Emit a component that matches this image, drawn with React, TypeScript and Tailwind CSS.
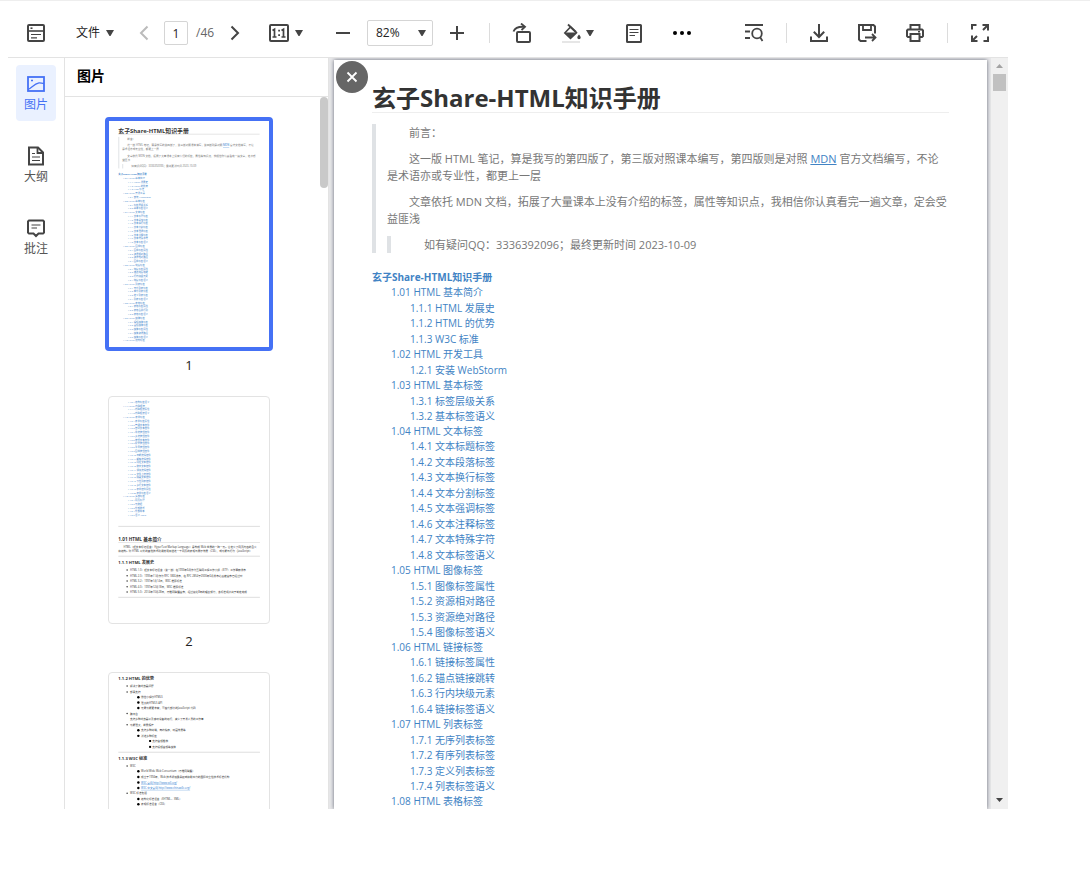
import { ReactNode, useState } from 'react';

type TocEntry = { level: number; text: string };

const TOC: TocEntry[] = [
  { level: 0, text: '玄子Share-HTML知识手册' },
  { level: 1, text: '1.01 HTML 基本简介' },
  { level: 2, text: '1.1.1 HTML 发展史' },
  { level: 2, text: '1.1.2 HTML 的优势' },
  { level: 2, text: '1.1.3 W3C 标准' },
  { level: 1, text: '1.02 HTML 开发工具' },
  { level: 2, text: '1.2.1 安装 WebStorm' },
  { level: 1, text: '1.03 HTML 基本标签' },
  { level: 2, text: '1.3.1 标签层级关系' },
  { level: 2, text: '1.3.2 基本标签语义' },
  { level: 1, text: '1.04 HTML 文本标签' },
  { level: 2, text: '1.4.1 文本标题标签' },
  { level: 2, text: '1.4.2 文本段落标签' },
  { level: 2, text: '1.4.3 文本换行标签' },
  { level: 2, text: '1.4.4 文本分割标签' },
  { level: 2, text: '1.4.5 文本强调标签' },
  { level: 2, text: '1.4.6 文本注释标签' },
  { level: 2, text: '1.4.7 文本特殊字符' },
  { level: 2, text: '1.4.8 文本标签语义' },
  { level: 1, text: '1.05 HTML 图像标签' },
  { level: 2, text: '1.5.1 图像标签属性' },
  { level: 2, text: '1.5.2 资源相对路径' },
  { level: 2, text: '1.5.3 资源绝对路径' },
  { level: 2, text: '1.5.4 图像标签语义' },
  { level: 1, text: '1.06 HTML 链接标签' },
  { level: 2, text: '1.6.1 链接标签属性' },
  { level: 2, text: '1.6.2 锚点链接跳转' },
  { level: 2, text: '1.6.3 行内块级元素' },
  { level: 2, text: '1.6.4 链接标签语义' },
  { level: 1, text: '1.07 HTML 列表标签' },
  { level: 2, text: '1.7.1 无序列表标签' },
  { level: 2, text: '1.7.2 有序列表标签' },
  { level: 2, text: '1.7.3 定义列表标签' },
  { level: 2, text: '1.7.4 列表标签语义' },
  { level: 1, text: '1.08 HTML 表格标签' },
];

// rest of the first page, only visible in its thumbnail
const TOC_PAGE_1_REST: TocEntry[] = [
  { level: 2, text: '1.8.1 表格标签属性' },
  { level: 2, text: '1.8.2 表格合并行列' },
  { level: 2, text: '1.8.3 表格标签语义' },
  { level: 1, text: '1.09 HTML 媒体标签' },
  { level: 2, text: '1.9.1 视频媒体标签' },
  { level: 2, text: '1.9.2 音频媒体标签' },
  { level: 2, text: '1.9.3 媒体标签属性' },
  { level: 2, text: '1.9.4 媒体资源路径' },
  { level: 2, text: '1.9.5 媒体标签语义' },
  { level: 1, text: '1.10 HTML 结构标签' },
];

const TOC_PAGE_2: TocEntry[] = [
  { level: 2, text: '1.10.1 结构标签语义' },
  { level: 1, text: '1.11 HTML 内联框架' },
  { level: 2, text: '1.11.1 内联框架属性' },
  { level: 2, text: '1.11.2 内联框架语义' },
  { level: 1, text: '1.12 HTML 表单标签' },
  { level: 2, text: '1.12.1 表单标签属性' },
  { level: 2, text: '1.12.2 普通文本控件' },
  { level: 2, text: '1.12.3 密码文本控件' },
  { level: 2, text: '1.12.4 单选按钮控件' },
  { level: 2, text: '1.12.5 多选按钮控件' },
  { level: 2, text: '1.12.6 按钮文本控件' },
  { level: 2, text: '1.12.7 提交按钮控件' },
  { level: 2, text: '1.12.8 重置按钮控件' },
  { level: 2, text: '1.12.9 图像按钮控件' },
  { level: 2, text: '1.12.10 日期选择控件' },
  { level: 2, text: '1.12.11 邮箱选择控件' },
  { level: 2, text: '1.12.12 网址文本控件' },
  { level: 2, text: '1.12.13 数字文本控件' },
  { level: 2, text: '1.12.14 滑块选择控件' },
  { level: 2, text: '1.12.15 文件上传控件' },
  { level: 2, text: '1.12.16 隐藏文本控件' },
  { level: 2, text: '1.12.17 下拉列表控件' },
  { level: 2, text: '1.12.18 多行文本控件' },
  { level: 2, text: '1.12.19 表单控件属性' },
  { level: 2, text: '1.12.20 表单标签语义' },
  { level: 1, text: '1.13 HTML 头部标签' },
  { level: 2, text: '1.13.1 网页标题' },
  { level: 2, text: '1.13.2 元数据' },
  { level: 2, text: '1.13.3 外部样式' },
  { level: 2, text: '1.13.4 外部脚本' },
  { level: 2, text: '1.13.5 语义 Meta' },
];

const HISTORY = [
  { y: 711, text: 'HTML 1.0：超文本标记语言（第一版）在1993年6月作为互联网工程工作小组（IETF）工作草案发布' },
  { y: 735, text: 'HTML 2.0：1995年11月作为 RFC 1866发布，在 RFC 2854于2000年6月发布之后被宣布已经过时' },
  { y: 756, text: 'HTML 3.2：1997年1月14日，W3C 推荐标准' },
  { y: 780, text: 'HTML 4.0：1997年12月18日，W3C 推荐标准' },
  { y: 801, text: 'HTML 5.0：2014年10月28日，万维网联盟宣布，经过接近8年的艰苦努力，该标准规范终于制定完成' },
];

const PAGE_3_ITEMS = [
  { level: 1, y: 57, text: '解决了跨浏览器问题' },
  { level: 1, y: 82, text: '部署支持' },
  { level: 2, y: 103, text: '微信小程序HTML5' },
  { level: 2, y: 125, text: '强大的HTML5 API' },
  { level: 2, y: 147, text: '元素功能更丰富，可替代部分的JavaScript 代码' },
  { level: 1, y: 170, text: '跨平台' },
  { level: 1, y: 192, text: '支持多种浏览器以及移动设备的运行，减少了开发人员的工作量', plain: true },
  { level: 1, y: 216, text: '功能强大，前景辉煌' },
  { level: 2, y: 238, text: '支持多种终端，离线缓存，动画效果等' },
  { level: 2, y: 261, text: '新增多种标签' },
  { level: 3, y: 282, text: '支持音频播放' },
  { level: 3, y: 306, text: '支持视频音频等媒体' },
  { level: 1, y: 384, text: 'W3C' },
  { level: 2, y: 406, text: 'World Wide Web Consortium（万维网联盟）' },
  { level: 2, y: 429, text: '成立于1994年，Web 技术领域最具权威和影响力的国际中立性技术标准机构' },
  { level: 2, y: 452, text: 'W3C 官网 http://www.w3.org/', link: true },
  { level: 2, y: 474, text: 'W3C 中文官网 http://www.chinaw3c.org/', link: true },
  { level: 1, y: 496, text: 'W3C 标准包括' },
  { level: 2, y: 519, text: '结构化标准语言（XHTML 、XML）' },
  { level: 2, y: 541, text: '表现标准语言（CSS）' },
];

function PageImage({ children }: { children: ReactNode }) {
  return (
    <svg
      viewBox="0 0 654 924"
      className="block h-[226px] w-[160px]"
      fontFamily="'Open Sans', 'Noto Sans CJK SC', sans-serif"
      fontSize="10.8"
      fill="#333"
      aria-hidden="true"
    >
      {children}
    </svg>
  );
}

function TocImage({ entries, top }: { entries: TocEntry[]; top: number }) {
  return (
    <g fill="#3f85cb" fontSize="9.7">
      {entries.map((entry, i) => (
        <text
          key={entry.text}
          x={38 + entry.level * 19.5}
          y={top + i * 15.44}
          fontWeight={entry.level === 0 ? 700 : 400}
        >
          {entry.text}
        </text>
      ))}
    </g>
  );
}

function PageOneImage() {
  return (
    <PageImage>
      <text x="38" y="48" fontSize="24" fontWeight="700">玄子Share-HTML知识手册</text>
      <path d="M38 54h578" stroke="#ddd" strokeWidth="3" />
      <path d="M40 65v129M56 176v18" stroke="#dfe2e5" strokeWidth="4" />
      <g fill="#777">
        <text x="75" y="77">前言：</text>
        <text x="75" y="103">这一版 HTML 笔记，算是我写的第四版了，第三版对照课本编写，第四版则是对照</text>
        <text x="466" y="103" fill="#2a7ad0" textDecoration="underline">MDN</text>
        <text x="495" y="103">官方文档编写，不论</text>
        <text x="54" y="120">是术语亦或专业性，都更上一层</text>
        <text x="75" y="146">文章依托 MDN 文档，拓展了大量课本上没有介绍的标签，属性等知识点，我相信你认真看完一遍文章，定会受</text>
        <text x="54" y="163">益匪浅</text>
        <text x="91" y="189">如有疑问QQ：3336392096；最终更新时间 2023-10-09</text>
      </g>
      <TocImage entries={[...TOC, ...TOC_PAGE_1_REST]} top={222} />
    </PageImage>
  );
}

function PageTwoImage() {
  return (
    <PageImage>
      <TocImage entries={TOC_PAGE_2} top={24} />
      <path d="M38 529h579M38 651h579M38 819h579" stroke="#ddd" strokeWidth="4" />
      <text x="38" y="589" fontSize="19" fontWeight="700">1.01 HTML 基本简介</text>
      <path d="M38 595h579" stroke="#ddd" strokeWidth="3" />
      <text x="59" y="617">HTML（超文本标记语言：HyperText Markup Language）是构成 Web 世界的一砖一瓦。它定义了网页内容的含义</text>
      <text x="38" y="633">和结构。除 HTML 以外的其他技术则通常用来描述一个网页的表现与展示效果（CSS），或功能与行为（JavaScript）</text>
      <text x="38" y="683" fontSize="17" fontWeight="700">1.1.1 HTML 发展史</text>
      {HISTORY.map((item) => (
        <g key={item.y}>
          <circle cx="74" cy={item.y - 4} r="3" />
          <text x="86" y={item.y}>{item.text}</text>
        </g>
      ))}
    </PageImage>
  );
}

function PageThreeImage() {
  const textX = [0, 86, 131, 177];
  return (
    <PageImage>
      <text x="38" y="29" fontSize="17" fontWeight="700">1.1.2 HTML 的优势</text>
      <path d="M38 324h579" stroke="#ddd" strokeWidth="4" />
      <text x="38" y="355" fontSize="17" fontWeight="700">1.1.3 W3C 标准</text>
      {PAGE_3_ITEMS.map((item) => (
        <g key={item.y}>
          {item.level === 1 && !item.plain && <circle cx="74" cy={item.y - 4} r="3" />}
          {item.level === 2 && <circle cx="120" cy={item.y - 4} r="5" fill="#000" />}
          {item.level === 3 && <rect x="164" y={item.y - 8} width="8" height="8" fill="#000" />}
          <text
            x={textX[item.level]}
            y={item.y}
            fill={item.link ? '#2a7ad0' : undefined}
            textDecoration={item.link ? 'underline' : undefined}
          >
            {item.text}
          </text>
        </g>
      ))}
    </PageImage>
  );
}

const THUMBNAILS = [
  { page: 1, image: <PageOneImage /> },
  { page: 2, image: <PageTwoImage /> },
  { page: 3, image: <PageThreeImage /> },
];

function Icon({ children }: { children: ReactNode }) {
  return (
    <svg
      viewBox="0 0 20 20"
      className="block h-5 w-5 shrink-0"
      fill="none"
      stroke="currentColor"
      strokeWidth="2"
      aria-hidden="true"
    >
      {children}
    </svg>
  );
}

function Caret() {
  return (
    <svg viewBox="0 0 8 6" className="block h-1.5 w-2 shrink-0 text-[#444]" fill="currentColor" aria-hidden="true">
      <path d="M0 0h8L4.5 6h-1z" />
    </svg>
  );
}

function ToolButton({ label, className, children }: { label: string; className: string; children: ReactNode }) {
  return (
    <button
      type="button"
      aria-label={label}
      title={label}
      className={`flex h-10 shrink-0 items-center justify-center rounded hover:bg-gray-100 ${className}`}
    >
      {children}
    </button>
  );
}

function Divider() {
  return <div className="ml-3 h-5 w-px shrink-0 bg-[#dcdcdc]" />;
}

function Toolbar() {
  const [zoom, setZoom] = useState('82%');
  const [page, setPage] = useState('1');

  return (
    <header className="flex h-[57px] shrink-0 items-center border-b border-[#e3e3e3] px-2 pt-2 text-xs text-[#444]">
      <ToolButton label="侧边栏" className="w-10">
        <Icon>
          <rect x="2" y="2" width="16" height="16" rx="1" />
          <path d="M2 8h16" strokeWidth="1.6" />
          <path d="M4.5 5.2h2" strokeWidth="1.6" />
          <path d="M5 11.5h10M5 14.8h6" strokeWidth="1.2" />
        </Icon>
      </ToolButton>
      <button type="button" className="ml-5 flex h-10 w-[38px] shrink-0 items-center justify-between text-[#222]">
        文件
        <Caret />
      </button>

      <ToolButton label="上一页" className="ml-[14px] w-8 text-[#bbb]">
        <Icon>
          <path d="M13.5 3.5 7 10l6.5 6.5" />
        </Icon>
      </ToolButton>
      <input
        aria-label="页码"
        value={page}
        onChange={(e) => setPage(e.target.value)}
        className="ml-1 h-6 w-6 shrink-0 rounded-xs border border-[#d5d5d5] text-center text-[#222] outline-none"
      />
      <span className="ml-2 w-5 shrink-0 text-[#666]">/46</span>
      <ToolButton label="下一页" className="ml-[3px] w-8">
        <Icon>
          <path d="M6.5 3.5 13 10l-6.5 6.5" />
        </Icon>
      </ToolButton>

      <button
        type="button"
        aria-label="实际大小"
        className="ml-[18px] flex h-10 w-[34px] shrink-0 items-center justify-between"
      >
        <Icon>
          <rect x="1" y="2" width="18" height="16" rx="1" />
          <path d="M3.5 7.5 5.5 6.2V14M3.5 14h4M12.5 7.5l2-1.3V14M12.5 14h4" strokeWidth="1.7" />
          <path d="M9.2 7.6H11M9.2 12.2H11" strokeWidth="1.8" />
        </Icon>
        <Caret />
      </button>
      <ToolButton label="缩小" className="ml-6 w-8">
        <Icon>
          <path d="M3 10h14" />
        </Icon>
      </ToolButton>
      <div className="relative ml-2 w-[66px] shrink-0">
        <select
          aria-label="缩放比例"
          value={zoom}
          onChange={(e) => setZoom(e.target.value)}
          className="block h-[26px] w-full appearance-none rounded-xs border border-[#d5d5d5] pl-2 text-[#222] outline-none"
        >
          <option>50%</option>
          <option>82%</option>
          <option>100%</option>
        </select>
        <div className="pointer-events-none absolute inset-y-0 right-[7px] flex items-center">
          <Caret />
        </div>
      </div>
      <ToolButton label="放大" className="ml-2 w-8">
        <Icon>
          <path d="M3 10h14M10 3v14" />
        </Icon>
      </ToolButton>

      <div className="ml-1">
        <Divider />
      </div>
      <ToolButton label="旋转" className="ml-3 w-10">
        <Icon>
          <rect x="5" y="9" width="13" height="10" rx="1" />
          <path d="M1.5 8.5C3 4.8 6.5 3.5 12 3.8" strokeWidth="1.9" />
          <path d="m9 .5 4 3.3L9.5 7" strokeWidth="1.8" />
        </Icon>
      </ToolButton>
      <button
        type="button"
        aria-label="背景颜色"
        className="ml-5 flex h-10 w-8 shrink-0 items-center justify-between"
      >
        <Icon>
          <path d="M0 19h18" stroke="#e6e6e6" />
          <path d="M6 1.5 14 9" strokeWidth="1.8" />
          <path d="M8.5 4 2.8 10l5.7 5.5 6-5.7z" strokeWidth="1.6" />
          <path d="M3 9.5h11.5l-6 6z" fill="currentColor" stroke="none" />
          <path
            d="M17 11.5c1.2 1.6 1.7 2.3 1.7 3.1a1.7 1.7 0 0 1-3.4 0c0-.8.5-1.5 1.7-3.1z"
            fill="currentColor"
            stroke="none"
          />
        </Icon>
        <Caret />
      </button>
      <ToolButton label="单页" className="ml-5 w-10">
        <Icon>
          <rect x="3" y="2" width="14" height="17" rx=".5" />
          <path d="M5.5 6.5h9M5.5 9.5h9M5.5 12.5H11" strokeWidth="1.2" />
        </Icon>
      </ToolButton>
      <ToolButton label="更多" className="ml-2 w-10 text-black">
        <Icon>
          <g fill="currentColor" stroke="none">
            <circle cx="3" cy="10" r="2" />
            <circle cx="10" cy="10" r="2" />
            <circle cx="17" cy="10" r="2" />
          </g>
        </Icon>
      </ToolButton>

      <ToolButton label="查找" className="ml-8 w-10">
        <Icon>
          <path d="M1 2h18M1 8.5h5M1 15h5" strokeWidth="1.8" />
          <circle cx="13" cy="10.5" r="4.8" strokeWidth="1.8" />
          <path d="m16 14 2.5 4" strokeWidth="1.8" />
        </Icon>
      </ToolButton>
      <Divider />
      <ToolButton label="下载" className="ml-3 w-10">
        <Icon>
          <path d="M10 1v13M4.8 8.8 10 14l5.2-5.2M2 13.5V18h16v-4.5" />
        </Icon>
      </ToolButton>
      <ToolButton label="另存为" className="ml-2 w-10">
        <Icon>
          <path d="M9.5 18h-6L2 16.5V2h14.5L18 3.5v7" />
          <path d="M6 2v5h8V2" strokeWidth="1.8" />
          <path d="M8 14.500h10M15 11l3.500 3.500L15 18" strokeWidth="1.8" />
        </Icon>
      </ToolButton>
      <ToolButton label="打印" className="ml-2 w-10">
        <Icon>
          <path d="M5.5 6.5V2h9v4.5M5.5 14H3l-1-1V7.5l1-1h14l1 1V13l-1 1h-2.5" />
          <rect x="5.5" y="11" width="9" height="7" />
          <path d="M13 8.8h2" strokeWidth="1.4" />
        </Icon>
      </ToolButton>
      <Divider />
      <ToolButton label="全屏" className="ml-3 w-10">
        <Icon>
          <path d="M2 6.500V2h4.500M18 13.500V18h-4.500" />
          <path d="M12.500 2H18v5.500M18 2l-5 5M2 12.500V18h5.500M2 18l5-5" />
        </Icon>
      </ToolButton>
    </header>
  );
}

function RailButton({ label, active, children }: { label: string; active?: boolean; children: ReactNode }) {
  return (
    <button
      type="button"
      className={`flex h-14 w-10 flex-col items-center justify-center gap-px rounded pt-0.5 text-xs ${
        active ? 'bg-[#eaf1ff] text-[#4571f5]' : 'text-[#444]'
      }`}
    >
      <Icon>{children}</Icon>
      <span className={active ? 'leading-5' : 'leading-5 text-[#555]'}>{label}</span>
    </button>
  );
}

function Rail() {
  return (
    <nav className="flex w-[57px] shrink-0 flex-col items-center gap-4 border-r border-[#e3e3e3] pt-[7px]">
      <RailButton label="图片" active>
        <rect x="2" y="3" width="16" height="14" strokeWidth="1.8" />
        <path d="M5 6.5h2" strokeWidth="1.6" />
        <path d="M2 15.500C6 13.500 8 10 13 8.800c1.500-.2 3 .6 5 .7" strokeWidth="1.300" />
      </RailButton>
      <RailButton label="大纲">
        <path d="M3 1.5h9l5 5v12H3z" />
        <path d="M11.5 2v5h5" strokeWidth="1.8" />
        <path d="M6 7.5h3M6 11h8M6 14.5h8" strokeWidth="1.2" />
      </RailButton>
      <RailButton label="批注">
        <path d="M3 2.5h14l1 1v11l-1 1h-4.5L10 18l-2.5-2.5H3l-1-1v-11z" />
        <path d="M5.5 7h9M5.5 10H11" strokeWidth="1.2" />
      </RailButton>
    </nav>
  );
}

function ThumbnailPanel() {
  const [selected, setSelected] = useState(1);

  return (
    <aside className="flex w-[264px] shrink-0 flex-col border-r border-[#e3e3e3]">
      <h2 className="h-[39px] shrink-0 border-b border-[#e3e3e3] pl-3 text-sm leading-9 font-bold text-black">
        图片
      </h2>
      <div className="flex min-h-0 flex-1">
        <div className="flex flex-1 flex-col items-center gap-[18px] overflow-hidden pt-5 pr-[7px] text-[13px]">
          {THUMBNAILS.map(({ page, image }) => (
            <button
              key={page}
              type="button"
              onClick={() => setSelected(page)}
              className="flex shrink-0 flex-col items-center gap-1"
            >
              <div
                className={
                  selected === page
                    ? 'rounded border-4 border-[#4571f5]'
                    : 'm-[3px] rounded border border-[#e3e3e3]'
                }
              >
                {image}
              </div>
              <div className="leading-5 text-[#222]">{page}</div>
            </button>
          ))}
        </div>
        <div className="w-2">
          <div className="h-[91px] rounded bg-[#c9c9c9]" />
        </div>
      </div>
    </aside>
  );
}

const TOC_ROW = [
  'leading-[15px] font-bold',
  'pl-[19px] leading-[15px]',
  'pl-[38px] odd:leading-4 even:leading-[15px]',
];

function DocumentPage() {
  return (
    <article className="flex-1 bg-white px-[38px] pt-6 text-[11px] leading-[17px] text-[#777] shadow-[0_0_4px_#666b78]">
      <h1 className="border-b border-[#eee] text-2xl leading-7 font-bold whitespace-nowrap text-[#333]">
        玄子Share-HTML知识手册
      </h1>
      <blockquote className="mt-[11px] flex flex-col gap-[9px] border-l-4 border-[#dfe2e5] pr-px pl-[11px]">
        <p className="indent-[22px]">前言：</p>
        <p className="indent-[22px]">
          这一版 HTML 笔记，算是我写的第四版了，第三版对照课本编写，第四版则是对照{' '}
          <a href="#mdn" className="text-[#4183c4] underline">
            MDN
          </a>{' '}
          官方文档编写，不论是术语亦或专业性，都更上一层
        </p>
        <p className="indent-[22px]">
          文章依托 MDN 文档，拓展了大量课本上没有介绍的标签，属性等知识点，我相信你认真看完一遍文章，定会受益匪浅
        </p>
        <blockquote className="border-l-4 border-[#dfe2e5] pl-[11px]">
          <p className="indent-[22px]">如有疑问QQ：3336392096；最终更新时间 2023-10-09</p>
        </blockquote>
      </blockquote>
      <ul className="mt-[17px] text-[10px] text-[#4183c4]">
        {TOC.map(({ level, text }) => (
          <li key={text} className={TOC_ROW[level]}>
            <a href="#toc">{text}</a>
          </li>
        ))}
      </ul>
    </article>
  );
}

export default function App() {
  return (
    <div className="flex h-screen flex-col border-t border-[#eee] bg-white pr-[82px] pb-[62px] pl-2 font-['Open_Sans','Noto_Sans_CJK_SC',sans-serif]">
      <Toolbar />
      <div className="flex min-h-0 flex-1">
        <Rail />
        <ThumbnailPanel />
        <main className="relative flex min-w-0 flex-1 overflow-hidden bg-[#e8e8ea]">
          <div className="flex min-w-0 flex-1 overflow-hidden pt-0.5 pr-1 pl-[5px]">
            <DocumentPage />
          </div>
          <div className="flex w-[17px] shrink-0 flex-col items-center bg-[#f0f0f0] text-[#a3a3a3]">
            <svg viewBox="0 0 17 16" className="h-4 w-[17px] shrink-0" aria-hidden="true">
              <path d="M5 10h7L8.5 6z" fill="currentColor" />
            </svg>
            <div className="h-[17px] w-[13px] bg-[#c1c1c1]" />
            <svg viewBox="0 0 17 16" className="mt-auto h-4 w-[17px] shrink-0 text-[#444]" aria-hidden="true">
              <path d="M5 5h7L8.5 9z" fill="currentColor" />
            </svg>
          </div>
          <button
            type="button"
            aria-label="关闭"
            className="absolute top-[3px] left-[7px] flex h-8 w-8 items-center justify-center rounded-full bg-[#666] text-white"
          >
            <Icon>
              <path d="m5.5 5.5 9 9M14.5 5.5l-9 9" strokeWidth="1.8" />
            </Icon>
          </button>
        </main>
      </div>
    </div>
  );
}
